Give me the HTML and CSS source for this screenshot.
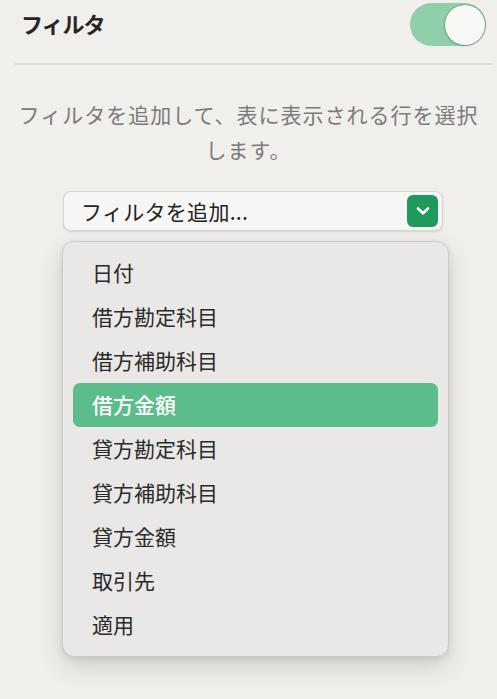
FILE: index.html
```html
<!DOCTYPE html>
<html lang="ja">
<head>
<meta charset="utf-8">
<link rel="stylesheet" href="styles.css">
</head>
<body>
<div class="panel">
  <div class="header">
    <div class="title">フィルタ</div>
    <div class="toggle"><div class="knob"></div></div>
  </div>
  <div class="divider"></div>
  <p class="desc">フィルタを追加して、表に表示される行を選択<br>します。</p>
  <div class="select">
    <span class="select-label">フィルタを追加...</span>
    <span class="select-btn">
      <svg width="16" height="12" viewBox="0 0 16 12"><path d="M3 3.5 L8 8.3 L13 3.5" fill="none" stroke="#fff" stroke-width="2.6" stroke-linecap="round" stroke-linejoin="round"/></svg>
    </span>
  </div>
  <div class="menu">
    <div class="item">日付</div>
    <div class="item">借方勘定科目</div>
    <div class="item">借方補助科目</div>
    <div class="item active">借方金額</div>
    <div class="item">貸方勘定科目</div>
    <div class="item">貸方補助科目</div>
    <div class="item">貸方金額</div>
    <div class="item">取引先</div>
    <div class="item">適用</div>
  </div>
</div>
</body>
</html>
```
FILE: styles.css
```css
html, body {
  margin: 0;
  padding: 0;
  background: #f0efeb;
}
body {
  font-family: "Noto Sans CJK JP", "Noto Sans", sans-serif;
  color: #2b2b2b;
  width: 497px;
  height: 699px;
  overflow: hidden;
}
.panel {
  display: flex;
  flex-direction: column;
}
.header {
  display: flex;
  align-items: center;
  justify-content: space-between;
  height: 48px;
  padding: 0 11px 0 21px;
}
.title {
  font-size: 22px;
  font-weight: 700;
  color: #262626;
  letter-spacing: -1px;
  margin-top: -2px;
}
.toggle {
  width: 76px;
  height: 43px;
  border-radius: 22px;
  background: #8fcfaa;
  display: flex;
  align-items: center;
  justify-content: flex-end;
  padding-right: 1px;
  box-sizing: border-box;
  margin-top: 1px;
}
.knob {
  width: 40px;
  height: 40px;
  border-radius: 50%;
  background: #f7f7f5;
  box-shadow: 0 0 0 1px rgba(0,0,0,0.18), 0 1px 2px rgba(0,0,0,0.15);
}
.divider {
  height: 2px;
  background: #dcdcd8;
  margin: 15px 5px 0 15px;
}
.desc {
  margin: 32px 0 0 0;
  text-align: center;
  font-size: 21px;
  line-height: 35px;
  letter-spacing: 1px;
  color: #7b7b7b;
}
.select {
  margin: 24px 0 0 63px;
  width: 380px;
  height: 40px;
  box-sizing: border-box;
  border: 1px solid #d6d6d2;
  border-radius: 8px;
  background: #f6f6f4;
  box-shadow: 0 1px 2px rgba(0,0,0,0.12);
  display: flex;
  align-items: center;
  justify-content: space-between;
  padding: 0 4px 0 17px;
}
.select-label {
  font-size: 21px;
  color: #222;
  letter-spacing: 0.3px;
}
.select-btn {
  width: 31px;
  height: 32px;
  border-radius: 6px;
  background: #1f9a5c;
  display: flex;
  align-items: center;
  justify-content: center;
}
.menu {
  margin: 10px 0 0 62px;
  width: 387px;
  height: 416px;
  box-sizing: border-box;
  border: 1px solid #c9c9c6;
  border-radius: 12px;
  background: #e9e8e6;
  box-shadow: 0 10px 24px rgba(0,0,0,0.14), 0 2px 6px rgba(0,0,0,0.08);
  padding: 9px 10px 0 10px;
  display: flex;
  flex-direction: column;
}
.item {
  height: 44px;
  flex: 0 0 44px;
  display: flex;
  align-items: center;
  padding-left: 19px;
  padding-bottom: 2px;
  box-sizing: border-box;
  font-size: 21px;
  color: #2a2a2a;
  border-radius: 7px;
}
.item.active {
  background: #5bbd89;
  color: #fff;
  font-weight: 500;
}
```
